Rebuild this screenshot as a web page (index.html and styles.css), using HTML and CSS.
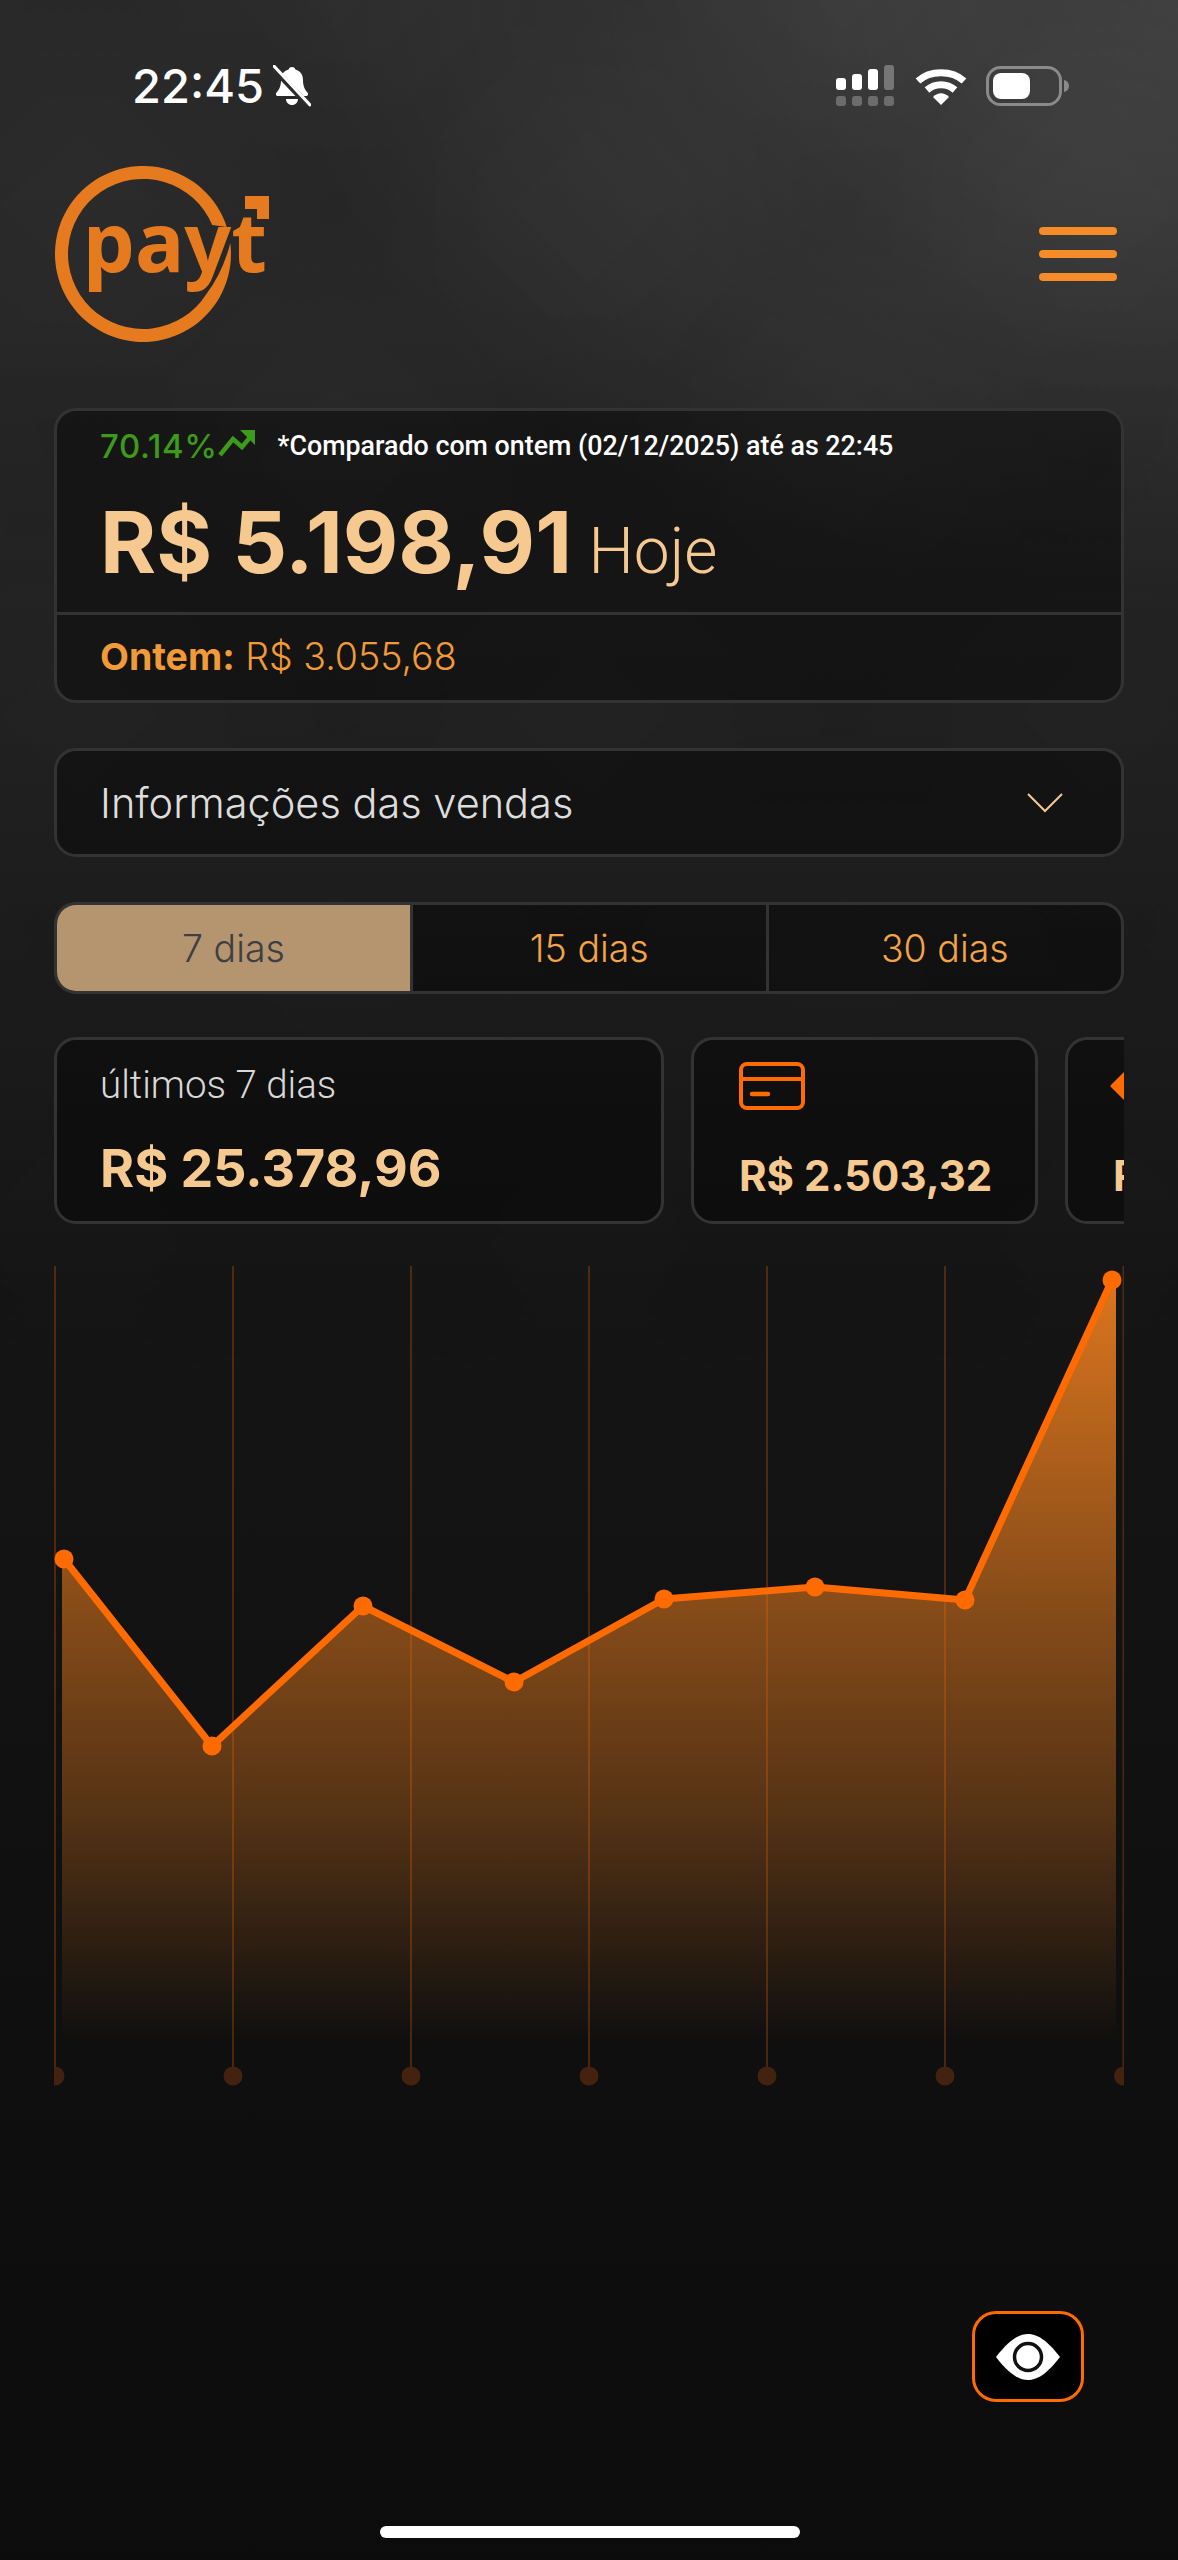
FILE: index.html
```html
<!DOCTYPE html>
<html lang="pt-BR">

<head>
  <meta charset="UTF-8">
  <meta name="viewport" content="width=device-width, initial-scale=1.0">
  <title>Payt</title>
  <link rel="stylesheet" href="styles.css">
</head>

<body>
  <div class="page">
    <div class="status">
      <div class="status-left">
        <span class="clock">22:45</span>
        <svg class="bell" width="38" height="42" viewBox="0 0 38 42">
          <path d="M19 2c2 0 3 1 3.400 2.600 5 1.400 7.600 5.400 7.600 10.400 0 6 1.600 9.400 4.400 12.400 1.400 1.600 .4 3.600-1.400 3.600H5c-1.800 0-2.800-2-1.400-3.600C6.400 24.400 8 21 8 15c0-5 2.600-9 7.600-10.400C16 3 17 2 19 2z" fill="#fff" />
          <path d="M13 34h12c0 3.400-2.600 6-6 6s-6-2.600-6-6z" fill="#fff" />
          <path d="M0 3 L36 41" stroke="#2c2c2c" stroke-width="6" />
          <path d="M1 1 L37 40" stroke="#fff" stroke-width="3" stroke-linecap="round" />
        </svg>
      </div>
      <div class="status-right">
        <svg width="60" height="42" viewBox="0 0 60 42">
          <rect x="0" y="13" width="10" height="12" rx="3" fill="#fff" />
          <rect x="16" y="9" width="10" height="16" rx="3" fill="#fff" />
          <rect x="32" y="4" width="10" height="21" rx="3" fill="#fff" />
          <rect x="48" y="0" width="10" height="25" rx="3" fill="#767676" />
          <rect x="0" y="31" width="10" height="10" rx="3" fill="#6c6c6c" />
          <rect x="16" y="31" width="10" height="10" rx="3" fill="#6c6c6c" />
          <rect x="32" y="31" width="10" height="10" rx="3" fill="#6c6c6c" />
          <rect x="48" y="31" width="10" height="10" rx="3" fill="#6c6c6c" />
        </svg>
        <svg width="52" height="40" viewBox="0 0 52 40">
          <path d="M3 15C15 4 37 4 49 15" fill="none" stroke="#fff" stroke-width="7" />
          <path d="M12 24C20 17 32 17 40 24" fill="none" stroke="#fff" stroke-width="7" />
          <path d="M18 31C23 26 29 26 34 31L26 39z" fill="#fff" />
        </svg>
        <svg width="84" height="40" viewBox="0 0 84 40">
          <rect x="1.500" y="1.500" width="73" height="37" rx="13" fill="none" stroke="#8a8a8a" stroke-width="3" />
          <rect x="7" y="7" width="37" height="26" rx="8" fill="#fff" />
          <path d="M78 14c3 .6 5 3 5 6s-2 5.400-5 6z" fill="#8a8a8a" />
        </svg>
      </div>
    </div>

    <header class="topbar">
      <svg class="logo" width="220" height="176" viewBox="53 166 220 176">
        <path d="M229.300 243A88 88 0 1 1 225.750 227L211.200 225A75 75 0 1 0 205.400 294Q222 272 229.300 243z" fill="#e57a1e" />
        <text x="82" y="272" font-family="Noto Sans" font-size="82" font-weight="700" fill="#e57a1e" textLength="184" lengthAdjust="spacingAndGlyphs">payt</text>
        <path d="M244 196H268V219H256V209H244z" fill="#e57a1e" />
      </svg>
      <div class="burger">
        <span></span>
        <span></span>
        <span></span>
      </div>
    </header>

    <section class="card today">
      <div class="today-top">
        <div class="compare">
          <span class="percent">70.14%</span>
          <svg class="trend" width="38" height="28" viewBox="0 0 38 28">
            <path d="M2 26L15 10L24 18L34 6" fill="none" stroke="#3d9a1a" stroke-width="4.500" />
            <path d="M22 1H37V16z" fill="#3d9a1a" />
          </svg>
          <span class="note">*Comparado com ontem (02/12/2025) até as 22:45</span>
        </div>
        <div class="amount"><strong>R$ 5.198,91</strong> <span>Hoje</span></div>
      </div>
      <div class="today-bottom"><b>Ontem:</b> R$ 3.055,68</div>
    </section>

    <section class="card info">
      <span>Informações das vendas</span>
      <svg width="36" height="20" viewBox="0 0 36 20">
        <path d="M1 1L18 18L35 1" fill="none" stroke="#f5c990" stroke-width="2" />
      </svg>
    </section>

    <nav class="card tabs">
      <div class="tab tab-active">7 dias</div>
      <div class="tab">15 dias</div>
      <div class="tab">30 dias</div>
    </nav>

    <div class="summary">
      <div class="card stat stat-wide">
        <div class="stat-label">últimos 7 dias</div>
        <div class="stat-total">R$ 25.378,96</div>
      </div>
      <div class="card stat stat-method">
        <svg width="66" height="48" viewBox="0 0 66 48">
          <rect x="2" y="2" width="62" height="44" rx="6" fill="none" stroke="#ff6b00" stroke-width="4" />
          <path d="M2 17H64" stroke="#ff6b00" stroke-width="4" />
          <path d="M13 32H29" stroke="#ff6b00" stroke-width="4.500" stroke-linecap="round" />
        </svg>
        <div class="stat-value">R$ 2.503,32</div>
      </div>
      <div class="card stat stat-method">
        <svg class="pix" width="48" height="48" viewBox="0 0 48 48">
          <path d="M24 3L45 24L24 45L3 24z" fill="#ff6b00" stroke="#ff6b00" stroke-width="3" stroke-linejoin="round" />
        </svg>
        <div class="stat-value">R$</div>
      </div>
    </div>

    <svg class="chart" width="1070" height="820" viewBox="54 1265 1070 820">
      <defs>
        <linearGradient id="areaFill" gradientUnits="userSpaceOnUse" x1="0" y1="1279" x2="0" y2="2040">
          <stop offset="0" stop-color="#f5821f" stop-opacity="0.88" />
          <stop offset="0.42" stop-color="#f5821f" stop-opacity="0.52" />
          <stop offset="0.7" stop-color="#f5821f" stop-opacity="0.3" />
          <stop offset="1" stop-color="#f5821f" stop-opacity="0" />
        </linearGradient>
      </defs>
      <path class="area" d="M62 1558L64 1558L212 1745L363 1605L514 1681L664 1598L815 1586L965 1599L1112 1279L1116 1279V2040H62z" />
      <g class="grid">
        <path d="M55 1265V2075" />
        <path d="M233 1265V2075" />
        <path d="M411 1265V2075" />
        <path d="M589 1265V2075" />
        <path d="M767 1265V2075" />
        <path d="M945 1265V2075" />
        <path d="M1123.500 1265V2075" />
      </g>
      <g class="ticks">
        <circle cx="55" cy="2075" r="9.500" />
        <circle cx="233" cy="2075" r="9.500" />
        <circle cx="411" cy="2075" r="9.500" />
        <circle cx="589" cy="2075" r="9.500" />
        <circle cx="767" cy="2075" r="9.500" />
        <circle cx="945" cy="2075" r="9.500" />
        <circle cx="1123.500" cy="2075" r="9.500" />
      </g>
      <polyline class="line" points="64,1558 212,1745 363,1605 514,1681 664,1598 815,1586 965,1599 1112,1279" />
      <g class="points">
        <circle cx="64" cy="1558" r="9.500" />
        <circle cx="212" cy="1745" r="9.500" />
        <circle cx="363" cy="1605" r="9.500" />
        <circle cx="514" cy="1681" r="9.500" />
        <circle cx="664" cy="1598" r="9.500" />
        <circle cx="815" cy="1586" r="9.500" />
        <circle cx="965" cy="1599" r="9.500" />
        <circle cx="1112" cy="1279" r="9.500" />
      </g>
    </svg>

    <button class="eye-btn">
      <svg width="66" height="48" viewBox="0 0 66 48">
        <path d="M1 24C14 7 24 1 33 1s19 6 32 23C52 41 42 47 33 47S14 41 1 24z" fill="#fff" />
        <circle cx="33" cy="24" r="13.500" fill="#fff" stroke="#111" stroke-width="3.500" />
      </svg>
    </button>
    <div class="home-bar"></div>
  </div>
</body>

</html>
```

FILE: styles.css
```css
* {
  box-sizing: border-box;
}

body {
  margin: 0;
  background: #0c0c0c;
  font-family: Inter, "Liberation Sans", sans-serif;
}

.page {
  position: relative;
  isolation: isolate;
  width: 1178px;
  height: 2560px;
  overflow: hidden;
  padding: 62px 54px 0;
  background:
    radial-gradient(ellipse 900px 620px at 100% 0, rgba(255, 255, 255, 0.12), rgba(255, 255, 255, 0)),
    linear-gradient(to bottom, #2c2c2c 0, #2a2a2a 300px, #212121 750px, #1b1b1b 1050px, #151515 1300px, #101010 1900px, #0c0c0c 2560px);
}

/* faint diamonds of the wallpaper */
.page::before {
  content: "";
  position: absolute;
  left: 0;
  top: 0;
  z-index: -1;
  width: 100%;
  height: 1400px;
  background:
    repeating-linear-gradient(45deg, rgba(0, 0, 0, 0.05) 0, rgba(0, 0, 0, 0) 130px, rgba(0, 0, 0, 0) 230px, rgba(0, 0, 0, 0.05) 360px),
    repeating-linear-gradient(-45deg, rgba(0, 0, 0, 0.05) 0, rgba(0, 0, 0, 0) 130px, rgba(0, 0, 0, 0) 230px, rgba(0, 0, 0, 0.05) 360px);
  -webkit-mask-image: linear-gradient(to bottom, #000 30%, transparent);
  mask-image: linear-gradient(to bottom, #000 30%, transparent);
}

/* status bar */
.status {
  display: flex;
  justify-content: space-between;
  align-items: center;
  height: 48px;
  padding: 0 54px 0 78px;
  color: #fff;
}

.status-left {
  display: flex;
  align-items: center;
  gap: 9px;
}

.clock {
  font-size: 47px;
  font-weight: 500;
  line-height: 48px;
}

.status-right {
  display: flex;
  align-items: center;
  gap: 19px;
}

/* header */
.topbar {
  display: flex;
  justify-content: space-between;
  align-items: center;
  height: 176px;
  margin-top: 56px;
  padding-right: 7px;
}

.logo {
  display: block;
}

.burger {
  display: flex;
  flex-direction: column;
  gap: 15px;
  width: 78px;
}

.burger span {
  height: 8px;
  border-radius: 4px;
  background: #f58c28;
}

/* cards */
.card {
  border: 3px solid #333333;
  border-radius: 22px;
  background: rgba(0, 0, 0, 0.38);
}

.today {
  height: 295px;
  margin-top: 66px;
}

.today-top {
  height: 204px;
  padding: 15px 0 0 43px;
  border-bottom: 3px solid #333333;
}

.compare {
  display: flex;
  align-items: center;
  height: 40px;
}

.percent {
  color: #3d9a1a;
  font-size: 33px;
  font-weight: 500;
  letter-spacing: 0.6px;
}

.trend {
  margin: 0 22px 6px 0;
}

.note {
  color: #fff;
  font-family: Roboto, sans-serif;
  font-size: 26.800px;
  font-weight: 500;
}

.amount {
  margin-top: 26px;
  color: #f5c990;
  line-height: 100px;
}

.amount strong {
  font-size: 85.500px;
  font-weight: 700;
}

.amount span {
  margin-left: 12px;
  font-family: Roboto, sans-serif;
  font-size: 64px;
  font-weight: 300;
}

.today-bottom {
  padding: 19px 0 0 43px;
  color: #f19a38;
  font-size: 37.500px;
  font-weight: 300;
  line-height: 46px;
}

.today-bottom b {
  font-weight: 700;
}

.info {
  display: flex;
  justify-content: space-between;
  align-items: center;
  height: 109px;
  margin-top: 45px;
  padding: 0 58px 0 43px;
  color: #dddddd;
  font-size: 41.500px;
  font-weight: 300;
}

.tabs {
  display: flex;
  height: 92px;
  margin-top: 45px;
  overflow: hidden;
}

.tab {
  display: flex;
  flex: 1;
  justify-content: center;
  align-items: center;
  border-left: 3px solid #333333;
  color: #f3a348;
  font-size: 37.500px;
  font-weight: 300;
}

.tab-active {
  flex: 0 0 353px;
  border-left: 0;
  background: #b49570;
  color: #3d3f42;
}

.summary {
  display: flex;
  gap: 27px;
  height: 187px;
  margin-top: 43px;
  overflow: hidden;
}

.stat {
  flex: none;
  height: 187px;
  padding-left: 43px;
}

.stat-wide {
  width: 610px;
}

.stat-method {
  width: 347px;
  padding-left: 45px;
}

.stat-method svg {
  display: block;
  margin-top: 22px;
}

.stat-method .pix {
  margin-left: -4px;
}

.stat-label {
  margin-top: 23px;
  color: #d8d8d8;
  font-family: Roboto, sans-serif;
  font-size: 38.500px;
  font-weight: 300;
  line-height: 44px;
}

.stat-total {
  margin-top: 31px;
  color: #f5c990;
  font-size: 52px;
  font-weight: 700;
  line-height: 62px;
}

.stat-value {
  margin-top: 41px;
  color: #f5c990;
  font-size: 42px;
  font-weight: 700;
  line-height: 50px;
}

/* chart */
.chart {
  display: block;
  margin-top: 42px;
}

.area {
  fill: url(#areaFill);
}

.grid path {
  stroke: #ff6b00;
  stroke-opacity: 0.25;
  stroke-width: 2;
}

.ticks circle {
  fill: #43230f;
}

.line {
  fill: none;
  stroke: #ff6b00;
  stroke-width: 7;
  stroke-linejoin: round;
}

.points circle {
  fill: #ff6b00;
}

/* floats over the page */
.eye-btn {
  position: absolute;
  left: 972px;
  top: 2311px;
  display: flex;
  justify-content: center;
  align-items: center;
  width: 112px;
  height: 91px;
  padding: 0;
  border: 3px solid #ff6b00;
  border-radius: 24px;
  background: #000000;
}

.home-bar {
  position: absolute;
  left: 380px;
  top: 2526px;
  width: 420px;
  height: 12px;
  border-radius: 6px;
  background: #ffffff;
}
```
